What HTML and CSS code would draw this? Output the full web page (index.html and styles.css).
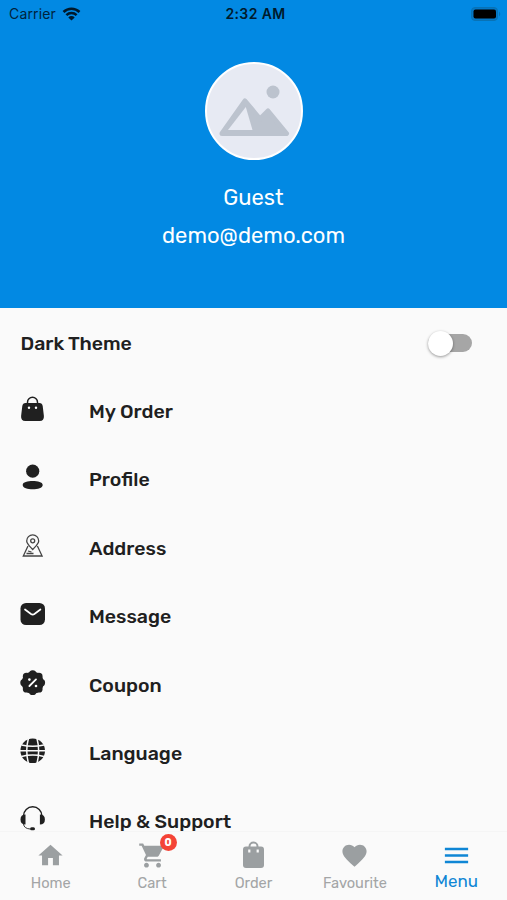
FILE: index.html
```html
<!DOCTYPE html>
<html lang="en">
<head>
    <meta charset="UTF-8">
    <meta name="viewport" content="width=device-width, initial-scale=1.0">
    <title>Menu</title>
    <link rel="stylesheet" href="styles.css">
</head>
<body>
    <header class="header">
        <div class="status-bar">
            <div class="carrier">
                <span>Carrier</span>
                <svg width="19" height="14" viewBox="0 0 18 14">
                    <path d="M1 5a11.4 11.4 0 0 1 16 0M3.900 8.200a7.300 7.300 0 0 1 10.200 0" fill="none" stroke="#001a2c" stroke-width="2.500"/>
                    <path d="M9 13.600L5.800 10.400a4.600 4.600 0 0 1 6.400 0z" fill="#001a2c"/>
                </svg>
            </div>
            <span class="time">2:32 AM</span>
            <div class="battery">
                <svg width="31" height="14" viewBox="0 0 31 14">
                    <rect x="0.5" y="0.5" width="26" height="13" rx="3.5" fill="#0477c5" stroke="#0872b5"/>
                    <rect x="2.5" y="2.5" width="22.5" height="9" rx="2" fill="#000"/>
                    <path d="M28 4.5q2.5 2.5 0 5z" fill="#0872b5"/>
                </svg>
            </div>
        </div>
        <div class="avatar">
            <svg width="94" height="94" viewBox="0 0 94 94">
                <circle cx="66" cy="28" r="6.5" fill="#bcc3ce"/>
                <path d="M15 69.500L38 37L53 55L61 47L79.500 69.500z" fill="#bcc3ce" stroke="#bcc3ce" stroke-width="5" stroke-linejoin="round"/>
                <path d="M21 66L38.800 43L45.500 66z" fill="#e7eaf3"/>
            </svg>
        </div>
        <div class="user-name">Guest</div>
        <div class="user-email">demo@demo.com</div>
    </header>

    <main class="menu">
        <div class="menu-row theme-row">
            <span>Dark Theme</span>
            <div class="switch"><div class="thumb"></div></div>
        </div>
        <div class="menu-row">
            <svg class="icon" width="26" height="26" viewBox="0 0 26 26">
                <path d="M7.500 10V6.300a5 5 0 0 1 10 0V10" fill="none" stroke="#202020" stroke-width="1.500"/>
                <path d="M5.500 7h14q2.700 0 3.200 3l1.200 10q.3 5-4.200 5H5.300q-4.500 0-4.200-5l1.200-10q.5-3 3.200-3z" fill="#202020"/>
                <circle cx="9" cy="11.800" r="1.200" fill="#fff"/>
                <circle cx="16" cy="11.800" r="1.200" fill="#fff"/>
            </svg>
            <span>My Order</span>
        </div>
        <div class="menu-row">
            <svg class="icon" width="26" height="26" viewBox="0 0 26 26">
                <circle cx="12.700" cy="7.200" r="6.600" fill="#202020"/>
                <path d="M2.700 21c0-3 5-4 10-4s10 1 10 4-5 4.300-10 4.300-10-1.300-10-4.300z" fill="#202020"/>
            </svg>
            <span>Profile</span>
        </div>
        <div class="menu-row">
            <svg class="icon" width="26" height="26" viewBox="0 0 26 26" fill="none" stroke="#444" stroke-width="1.300">
                <path d="M12.700 16.500C9 12.500 6.700 10.500 6.700 7.900a6 6 0 0 1 12 0c0 2.600-2.300 4.600-6 8.600z"/>
                <circle cx="12.700" cy="7.800" r="2"/>
                <path d="M8 13L3.300 23h18.800L17.400 13"/>
                <path d="M6.500 20.500h7M8 18l3.500 1"/>
            </svg>
            <span>Address</span>
        </div>
        <div class="menu-row">
            <svg class="icon" width="26" height="26" viewBox="0 0 26 26">
                <rect x="0.500" y="2" width="24.500" height="22" rx="5.500" fill="#202020"/>
                <path d="M5 8.500l6 4.500q1.700 1.200 3.400 0l6-4.500" fill="none" stroke="#fff" stroke-width="1.700" stroke-linecap="round"/>
            </svg>
            <span>Message</span>
        </div>
        <div class="menu-row">
            <svg class="icon" width="26" height="26" viewBox="0 0 26 26">
                <g fill="#202020">
                    <circle cx="12.700" cy="12.700" r="11"/>
                    <circle cx="12.700" cy="4" r="3.700"/>
                    <circle cx="18.900" cy="6.500" r="3.700"/>
                    <circle cx="21.400" cy="12.700" r="3.700"/>
                    <circle cx="18.900" cy="18.900" r="3.700"/>
                    <circle cx="12.700" cy="21.400" r="3.700"/>
                    <circle cx="6.500" cy="18.900" r="3.700"/>
                    <circle cx="4" cy="12.700" r="3.700"/>
                    <circle cx="6.500" cy="6.500" r="3.700"/>
                </g>
                <path d="M9.400 16l6.600-6.600" stroke="#fff" stroke-width="1.800" stroke-linecap="round"/>
                <circle cx="9.400" cy="9.600" r="1.300" fill="#fff"/>
                <circle cx="16" cy="16" r="1.300" fill="#fff"/>
            </svg>
            <span>Coupon</span>
        </div>
        <div class="menu-row">
            <svg class="icon" width="26" height="26" viewBox="0 0 26 26">
                <circle cx="12.700" cy="12.700" r="12.300" fill="#202020"/>
                <g fill="none" stroke="#fafafa" stroke-width="1.500">
                    <path d="M8.500 0Q5 12.700 8.500 26M16.900 0Q20.400 12.700 16.900 26"/>
                    <path d="M0 12.700h26M1.500 7q11.200 2.600 22.400 0M1.500 18.400q11.200-2.600 22.400 0"/>
                </g>
            </svg>
            <span>Language</span>
        </div>
        <div class="menu-row">
            <svg class="icon" width="26" height="26" viewBox="0 0 26 26">
                <path d="M3.500 11V10a9.200 9.200 0 0 1 18.400 0v1" fill="none" stroke="#202020" stroke-width="1.400"/>
                <path d="M5.500 8.500v10Q.5 18.500.5 13.500T5.500 8.500zM19.900 8.500v10q5 0 5-5t-5-5z" fill="#202020"/>
                <path d="M3.500 18q.5 4.500 6.500 5" fill="none" stroke="#202020" stroke-width="0.900"/>
                <rect x="10" y="21.300" width="5" height="3" rx="1.500" fill="#202020"/>
            </svg>
            <span>Help &amp; Support</span>
        </div>
    </main>

    <nav class="tab-bar">
        <div class="tab">
            <svg width="29" height="29" viewBox="0 0 24 24"><path d="M10 20v-6h4v6h5v-8h3L12 3 2 12h3v8z"/></svg>
            <span>Home</span>
        </div>
        <div class="tab">
            <div class="cart">
                <svg width="29" height="29" viewBox="0 0 24 24"><path d="M7 18c-1.100 0-1.990.9-1.990 2S5.900 22 7 22s2-.9 2-2-.9-2-2-2zM1 2v2h2l3.600 7.590-1.350 2.450c-.16.280-.25.610-.25.960 0 1.100.9 2 2 2h12v-2H7.420c-.14 0-.25-.11-.25-.25l.03-.12.900-1.630h7.450c.75 0 1.410-.41 1.750-1.030l3.580-6.490A1 1 0 0 0 20 4H5.210l-.94-2H1zm16 16c-1.100 0-1.990.9-1.990 2s.89 2 1.990 2 2-.9 2-2-.9-2-2-2z"/></svg>
                <span class="badge">0</span>
            </div>
            <span>Cart</span>
        </div>
        <div class="tab">
            <svg width="29" height="29" viewBox="0 0 29 29">
                <path d="M10.500 8V5.500a4 4 0 0 1 8 0V8" fill="none" stroke="#9b9fa1" stroke-width="2"/>
                <rect x="4" y="5.500" width="21" height="21.500" rx="3"/>
                <path d="M10.300 8.500v3M18.700 8.500v3" stroke="#fafafa" stroke-width="2.200"/>
            </svg>
            <span>Order</span>
        </div>
        <div class="tab">
            <svg width="31" height="29" viewBox="0 0 24 24"><path d="M12 21.350l-1.450-1.320C5.400 15.360 2 12.280 2 8.500 2 5.420 4.420 3 7.500 3c1.740 0 3.410.81 4.500 2.090C13.090 3.810 14.760 3 16.500 3 19.580 3 22 5.420 22 8.500c0 3.780-3.400 6.860-8.550 11.540z"/></svg>
            <span>Favourite</span>
        </div>
        <div class="tab active">
            <svg width="31" height="31" viewBox="0 0 24 24"><path d="M3 18h18v-2H3zm0-5h18v-2H3zm0-7v2h18V6z"/></svg>
            <span>Menu</span>
        </div>
    </nav>
</body>
</html>
```
FILE: styles.css
```css
* {
    box-sizing: border-box;
}
body {
    font-family: Rubik, Roboto, sans-serif;
    background-color: #fafafa;
    color: #202020;
    margin: 0;
    height: 900px;
    display: flex;
    flex-direction: column;
    overflow: hidden;
}
svg {
    display: block;
    flex: none;
}
.header {
    height: 308px;
    flex: none;
    background-color: #0289e3;
    color: white;
    display: flex;
    flex-direction: column;
    align-items: center;
}
.status-bar {
    width: 100%;
    height: 27px;
    padding: 0 5px 0 9px;
    display: grid;
    grid-template-columns: 1fr auto 1fr;
    align-items: center;
    font-family: Inter, sans-serif;
    font-size: 14px;
    color: #00233d;
}
.carrier {
    display: flex;
    align-items: center;
    gap: 6px;
    letter-spacing: 0.15px;
}
.time {
    font-weight: 600;
    letter-spacing: 0.4px;
    color: #001a2c;
}
.battery {
    display: flex;
    justify-content: flex-end;
}
.avatar {
    width: 98px;
    height: 98px;
    margin-top: 35px;
    border: 2px solid white;
    border-radius: 50%;
    background-color: #e7eaf3;
    overflow: hidden;
}
.user-name,
.user-email {
    font-size: 22px;
    line-height: 38px;
}
.user-name {
    margin-top: 19px;
}
.menu {
    flex: 1;
    min-height: 0;
    padding-top: 1px;
    overflow: hidden;
}
.menu-row {
    height: 68.4px;
    padding: 0 20px;
    display: flex;
    align-items: center;
    gap: 43px;
    font-size: 19.5px;
    font-weight: 500;
}
.theme-row {
    justify-content: space-between;
    padding: 0 35px 0 20.5px;
}
.icon {
    margin-bottom: 5px;
}
.switch {
    width: 44px;
    height: 18px;
    border-radius: 9px;
    background-color: #a6a6a6;
    display: flex;
    align-items: center;
}
.thumb {
    width: 25px;
    height: 25px;
    flex: none;
    border-radius: 50%;
    background-color: white;
    box-shadow: 0 1px 3px rgba(0, 0, 0, 0.4);
}
.tab-bar {
    height: 69px;
    flex: none;
    display: grid;
    grid-template-columns: repeat(5, 1fr);
    border-top: 1px solid #f5f5f5;
    background-color: #fafafa;
    color: #a3a5a6;
    fill: #9b9fa1;
    font-size: 14.6px;
}
.tab {
    display: flex;
    flex-direction: column;
    align-items: center;
    padding-top: 9px;
    line-height: 26px;
}
.active {
    color: #0f86d5;
    fill: #0f86d5;
    font-size: 17px;
    line-height: 20px;
    padding-top: 8px;
}
.cart {
    position: relative;
}
.badge {
    position: absolute;
    top: -7px;
    right: -10px;
    width: 17px;
    height: 17px;
    border-radius: 50%;
    background-color: #f44336;
    color: white;
    font-size: 10.5px;
    font-weight: 700;
    line-height: 17px;
    text-align: center;
}
```
